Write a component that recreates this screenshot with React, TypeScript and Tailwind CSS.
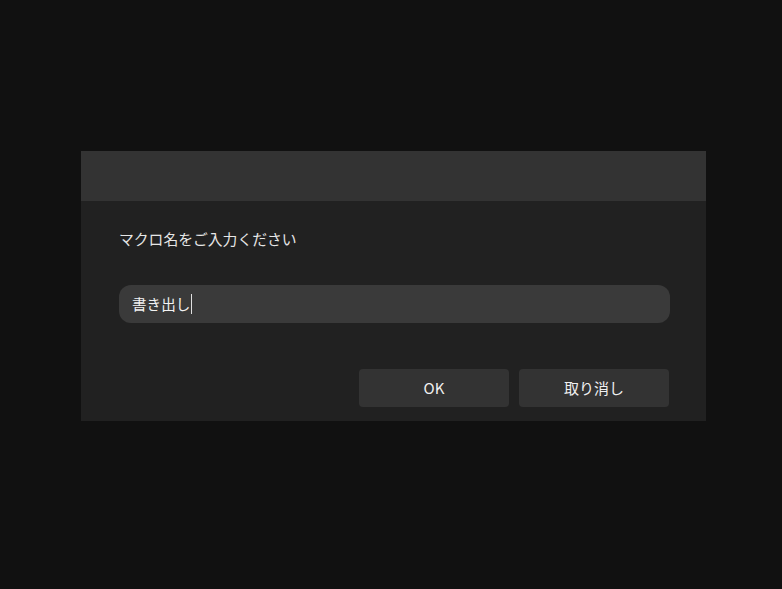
export default function App() {
  return (
    <div
      className="h-[589px] w-[782px] bg-[#111111] pt-[151px] pl-[81px]"
      style={{ fontFamily: '"Noto Sans CJK JP", "Noto Sans", sans-serif' }}
    >
      <div className="flex w-[625px] flex-col bg-[#212121]">
        <div className="h-[50px] bg-[#333333]" />
        <div className="flex flex-col pl-[38px] pr-[36px] pt-[28px] pb-[14px]">
          <p className="h-[20px] text-[14.8px] leading-[20px] text-[#e6e6e6]">マクロ名をご入力ください</p>
          <div className="mt-[36px] flex h-[38px] items-center rounded-[12px] bg-[#3a3a3a] px-[13px]">
            <span className="text-[14.6px] text-[#f2f2f2]">書き出し</span>
            <span className="ml-[1px] h-[20px] w-px bg-[#e0e0e0]" />
          </div>
          <div className="mt-[46px] flex justify-end gap-[10px] pr-px">
            <button className="h-[38px] w-[150px] rounded-[4px] bg-[#333333] text-[15px] text-[#f0f0f0]">OK</button>
            <button className="h-[38px] w-[150px] rounded-[4px] bg-[#333333] text-[15px] text-[#f0f0f0]">取り消し</button>
          </div>
        </div>
      </div>
    </div>
  )
}
